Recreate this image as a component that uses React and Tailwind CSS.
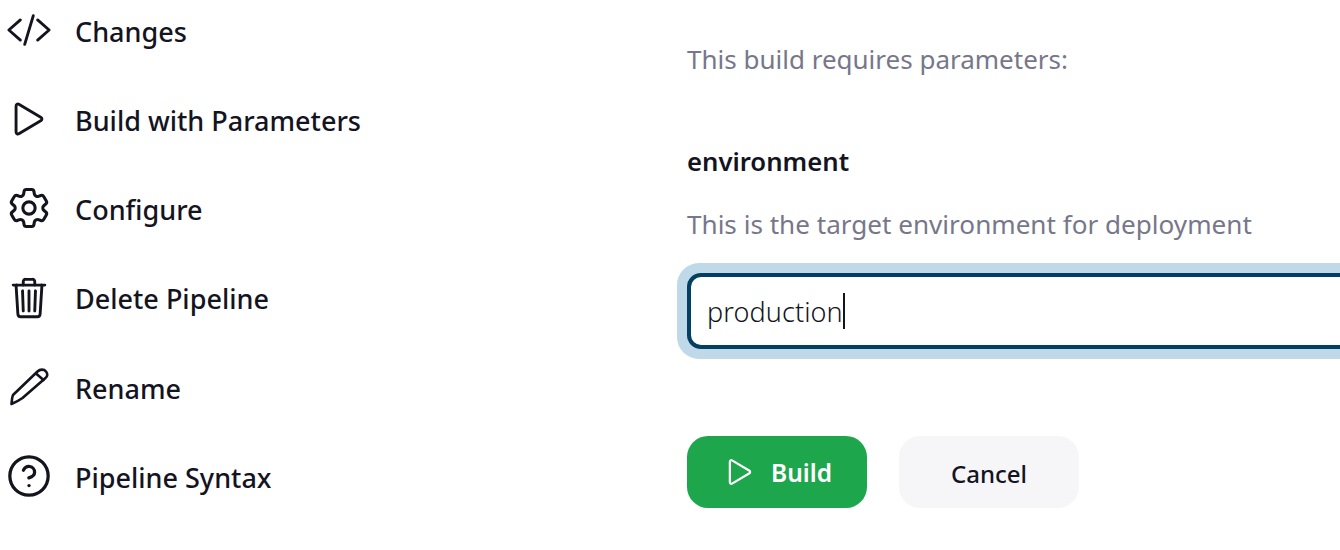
import { IoCodeSlashOutline, IoPlayOutline, IoTrashOutline } from "react-icons/io5";
import { HiOutlineCog6Tooth } from "react-icons/hi2";
import { CircleHelp } from "lucide-react";

const PencilIcon = ({ className }) => (
  <svg viewBox="0 0 46 46" fill="none" stroke="currentColor" strokeWidth="2.6" strokeLinejoin="round" strokeLinecap="round" className={className}>
    <path d="M5.5 40 C6 36 6 33 7 31 L31.5 7.5 C34 5 38 5 40 7.5 C42 10 41.5 12.5 39.5 14 L16.5 34 C13 36.5 9 38.5 5.5 40 Z" />
    <path d="M30 9.5 L37.5 16" />
  </svg>
);

const HelpIcon = ({ className }) => <CircleHelp strokeWidth={1.7} className={className} />;

const GearIcon = ({ className }) => <HiOutlineCog6Tooth className={`${className} scale-[1.07]`} />;

const sideItems = [
  { label: "Changes", icon: IoCodeSlashOutline },
  { label: "Build with Parameters", icon: IoPlayOutline },
  { label: "Configure", icon: GearIcon },
  { label: "Delete Pipeline", icon: IoTrashOutline },
  { label: "Rename", icon: PencilIcon },
  { label: "Pipeline Syntax", icon: HelpIcon },
];

export default function App() {
  return (
    <div className="flex h-[550px] w-[1340px] overflow-hidden bg-white font-['Noto_Sans',sans-serif] text-[#14141f]">
      {/* Sidebar */}
      <div className="-mt-[12.5px] w-[687px] shrink-0 pl-[6px]">
        {sideItems.map((item) => {
          const Icon = item.icon;
          return (
            <div key={item.label} className="flex h-[89.2px] items-center gap-[23px]">
              <Icon className="-mt-[4px] h-[46px] w-[46px] shrink-0" />
              <span className="text-[27px] font-medium">{item.label}</span>
            </div>
          );
        })}
      </div>

      {/* Form */}
      <div className="min-w-0 flex-1">
        <p className="mt-[39px] text-[26px] leading-[40px] text-[#77778a]">This build requires parameters:</p>

        <p className="mt-[63px] text-[25.7px] leading-[40px] font-semibold">environment</p>
        <p className="mt-[22px] text-[26.1px] leading-[40px] text-[#77778a]">This is the target environment for deployment</p>

        <div className="mt-[19px] -ml-[10px] flex h-[96px] w-[700px] rounded-l-[22px] bg-[#c0d9e8] py-[10px] pl-[10px]">
          <div className="flex flex-1 items-center rounded-l-[14px] border-y-[4px] border-l-[4px] border-[#033e63] bg-white pl-[16px]">
            <span className="mt-[2px] text-[27px] font-light tracking-[0.1px]">production</span>
            <span className="h-[36px] w-[2px] bg-[#14141f]" />
          </div>
        </div>

        <div className="mt-[77px] flex gap-[32px]">
          <button className="flex h-[72px] w-[180px] items-center justify-center gap-[13px] rounded-[21px] bg-[#1ea64d] pt-[3px] text-[24.5px] font-semibold text-white">
            <IoPlayOutline className="-mt-[4px] h-[36px] w-[36px]" />
            Build
          </button>
          <button className="h-[72px] w-[180px] rounded-[21px] bg-[#f6f6f9] pt-[3px] text-[24px] font-medium">Cancel</button>
        </div>
      </div>
    </div>
  );
}
